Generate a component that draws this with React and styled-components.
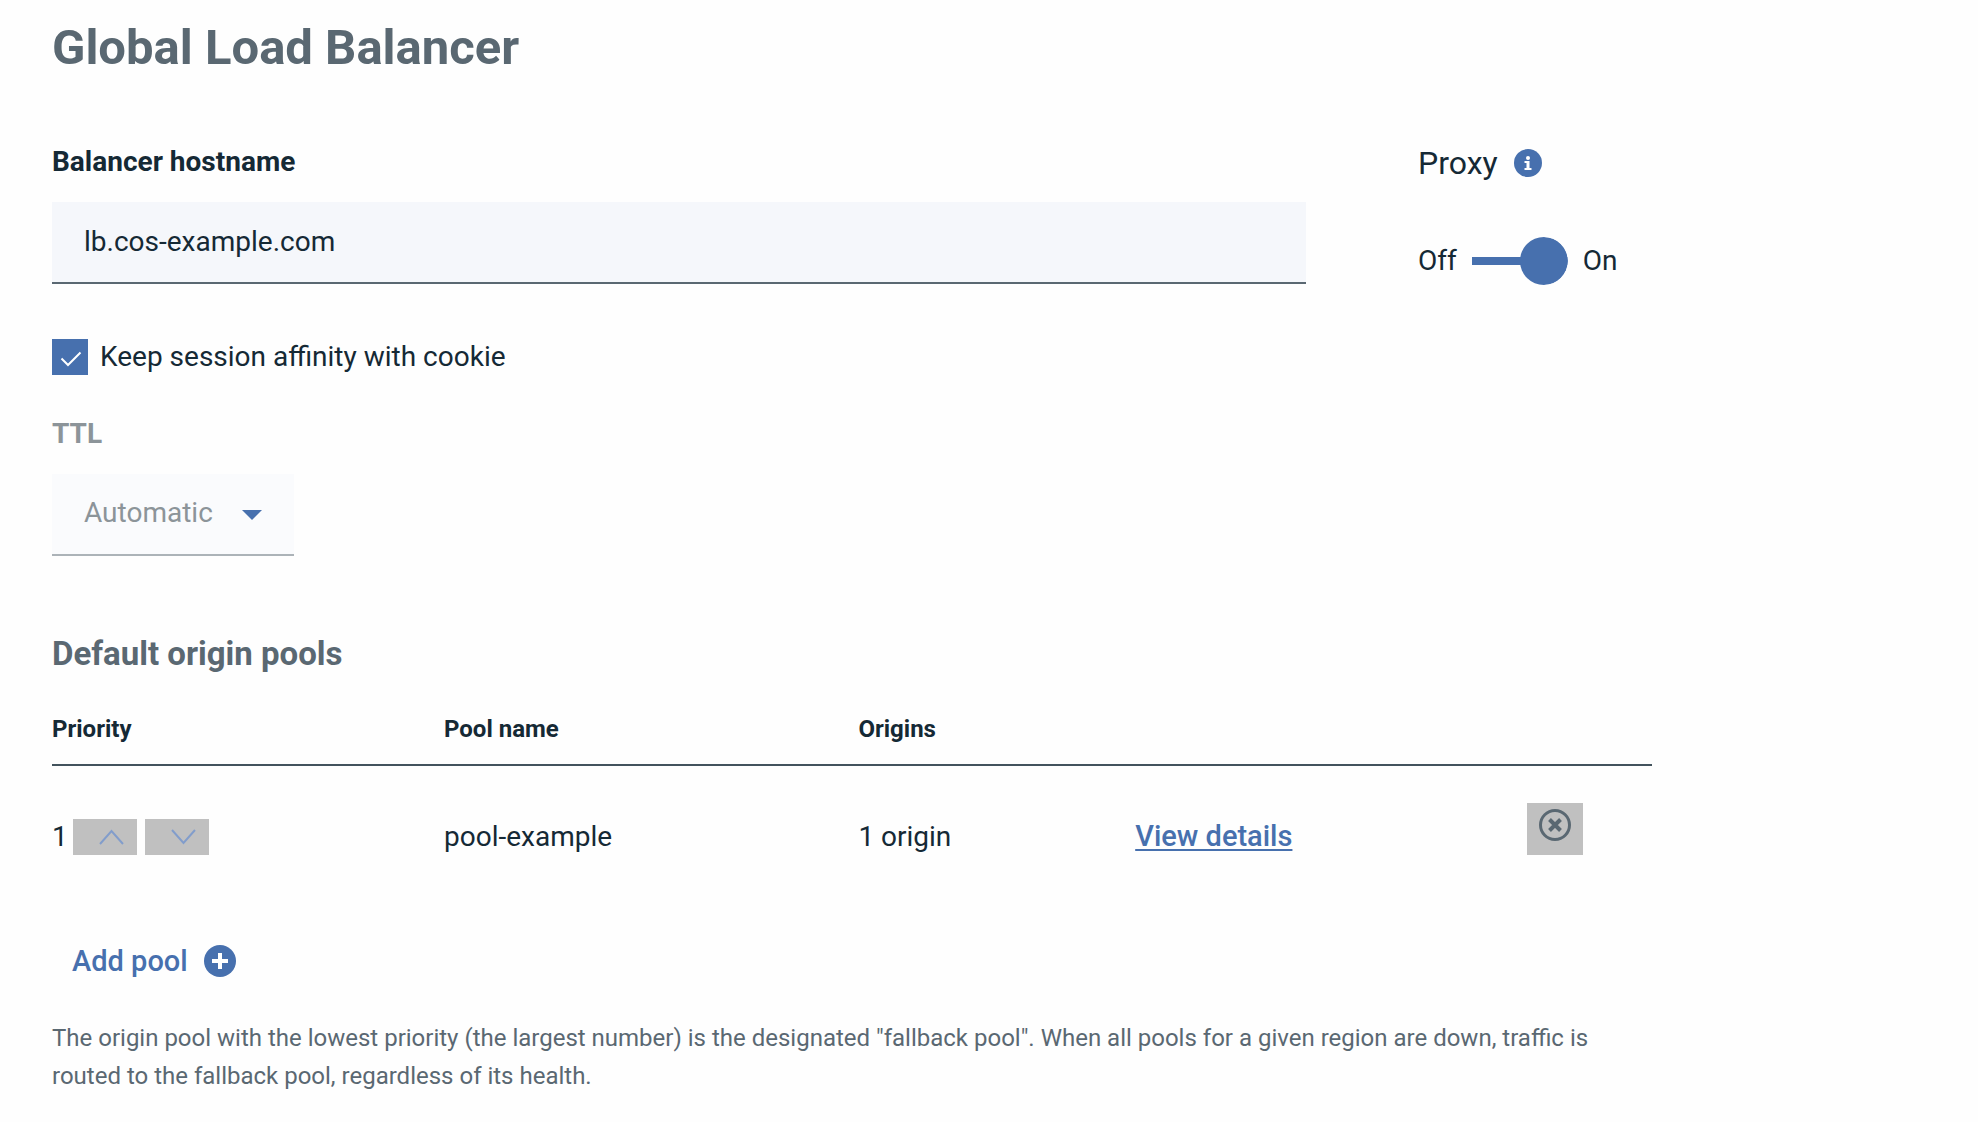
import React, { useState } from "react";
import styled, { createGlobalStyle } from "styled-components";

const color = {
  text: "#152935",
  muted: "#5a6872",
  disabled: "#8c9499",
  brand: "#4770ae",
  field: "#f5f7fb",
  fieldDisabled: "#fafbfd",
  button: "#c0c0c0",
};

const GlobalStyle = createGlobalStyle`
  *, *::before, *::after { box-sizing: border-box; }
  body {
    margin: 0;
    background: #fefefe;
    color: ${color.text};
    font-family: Roboto, "Liberation Sans", sans-serif;
    font-size: 28px;
    line-height: 36px;
  }
  button, input, select { font: inherit; color: inherit; }
`;

const Page = styled.main`
  max-width: 1704px;
  padding: 16px 52px 0;
`;

const Title = styled.h1`
  margin: 0;
  color: ${color.muted};
  font-size: 49px;
  line-height: 64px;
  font-weight: 700;
`;

const Settings = styled.div`
  display: grid;
  grid-template-columns: minmax(0, 1fr) 234px;
  column-gap: 112px;
  margin-top: 64px;
`;

const Fields = styled.div`
  display: flex;
  flex-direction: column;
  align-items: flex-start;
`;

const FieldLabel = styled.label`
  display: block;
  margin-bottom: 22px;
  font-weight: 700;
  color: ${(p) => (p.$disabled ? color.disabled : color.text)};
`;

const HostInput = styled.input`
  width: 100%;
  height: 82px;
  padding: 0 32px 2px;
  border: 0;
  border-bottom: 2px solid ${color.muted};
  border-radius: 0;
  background: ${color.field};
  outline: none;
`;

const CheckRow = styled.label`
  display: flex;
  align-items: center;
  gap: 12px;
  margin: 55px 0 41px;
`;

const CheckBoxWrap = styled.span`
  display: grid;
  place-items: center;
  width: 36px;
  height: 36px;
  > * { grid-area: 1 / 1; }
  svg { pointer-events: none; }
`;

const CheckInput = styled.input`
  appearance: none;
  width: 36px;
  height: 36px;
  margin: 0;
  border: 2px solid ${color.brand};
  &:checked { background: ${color.brand}; }
`;

const SelectWrap = styled.div`
  display: grid;
  align-items: center;
  justify-items: end;
  width: 242px;
  > * { grid-area: 1 / 1; }
  svg { margin-right: 32px; pointer-events: none; }
`;

const TtlSelect = styled.select`
  appearance: none;
  width: 100%;
  height: 82px;
  padding: 0 32px 2px;
  border: 0;
  border-bottom: 2px solid #acb3b8;
  border-radius: 0;
  background: ${color.fieldDisabled};
  color: ${color.disabled};
  opacity: 1;
`;

const ProxyHeading = styled.div`
  display: flex;
  align-items: center;
  gap: 16px;
  font-size: 32px;
  line-height: 38px;
`;

const InfoButton = styled.button`
  display: flex;
  padding: 0;
  border: 0;
  background: none;
`;

const ToggleRow = styled.label`
  display: flex;
  align-items: center;
  gap: 15px;
  margin-top: 55px;
`;

const Toggle = styled.input`
  appearance: none;
  display: flex;
  align-items: center;
  justify-content: ${(p) => (p.checked ? "flex-end" : "flex-start")};
  width: 96px;
  height: 48px;
  margin: 0;
  background: linear-gradient(${color.brand}, ${color.brand}) center / 100% 8px no-repeat;
  clip-path: inset(0 round 0 24px 24px 0);
  &::after {
    content: "";
    width: 48px;
    height: 48px;
    border-radius: 50%;
    background: ${color.brand};
  }
`;

const SectionTitle = styled.h2`
  margin: 78px 0 0;
  color: ${color.muted};
  font-size: 33px;
  line-height: 40px;
  font-weight: 700;
`;

const PoolTable = styled.table`
  width: 100%;
  margin-top: 39px;
  border-collapse: collapse;
  table-layout: fixed;
`;

const HeadCell = styled.th`
  width: ${(p) => p.$width};
  padding: 0 0 19px;
  border-bottom: 2px solid #43535d;
  font-size: 24px;
  line-height: 32px;
  font-weight: 700;
  text-align: left;
`;

const Cell = styled.td`
  height: 124px;
  padding: 18px 0 0;
  vertical-align: middle;
`;

const Priority = styled.div`
  display: flex;
  align-items: center;
`;

const MoveButton = styled.button`
  display: flex;
  align-items: center;
  justify-content: flex-end;
  width: 64px;
  height: 36px;
  margin-right: 8px;
  padding: 0 12px;
  border: 0;
  background: ${color.button};
`;

const Rank = styled.span`
  width: 21px;
`;

const DetailsLink = styled.a`
  color: ${color.brand};
  font-size: 29px;
  font-weight: 500;
  text-decoration: underline;
  text-decoration-thickness: 2px;
  text-underline-offset: 3px;
`;

const RemoveButton = styled.button`
  display: flex;
  justify-content: center;
  width: 56px;
  height: 52px;
  margin-bottom: 16px;
  padding: 6px 0 0;
  border: 0;
  background: ${color.button};
`;

const AddButton = styled.button`
  display: flex;
  align-items: center;
  gap: 16px;
  margin: 54px 0 0 20px;
  padding: 0;
  border: 0;
  background: none;
  color: ${color.brand};
  font-size: 29px;
  font-weight: 500;
`;

const Note = styled.p`
  margin: 40px 0 0;
  color: ${color.muted};
  font-size: 24px;
  line-height: 38px;
`;

const Chevron = ({ up }) => (
  <svg width="28" height="20" viewBox="0 0 28 20" fill="none" stroke="#829dcb" strokeWidth="2" aria-hidden="true">
    <path d={up ? "M3 17 14.5 4 26 17" : "M3 3 14.5 16 26 3"} />
  </svg>
);

const pools = [{ name: "pool-example", origins: "1 origin" }];

export default function App() {
  const [host, setHost] = useState("lb.cos-example.com");
  const [sticky, setSticky] = useState(true);
  const [proxy, setProxy] = useState(true);

  return (
    <>
      <GlobalStyle />
      <Page>
        <Title>Global Load Balancer</Title>
        <Settings>
          <Fields>
            <FieldLabel htmlFor="hostname">Balancer hostname</FieldLabel>
            <HostInput id="hostname" type="text" value={host} onChange={(e) => setHost(e.target.value)} />
            <CheckRow>
              <CheckBoxWrap>
                <CheckInput type="checkbox" checked={sticky} onChange={(e) => setSticky(e.target.checked)} />
                {sticky && (
                  <svg width="36" height="36" viewBox="0 0 36 36" fill="none" stroke="#fff" strokeWidth="2" aria-hidden="true">
                    <path d="M9.5 19.5 16 26 28.5 13.5" />
                  </svg>
                )}
              </CheckBoxWrap>
              Keep session affinity with cookie
            </CheckRow>
            <FieldLabel htmlFor="ttl" $disabled>TTL</FieldLabel>
            <SelectWrap>
              <TtlSelect id="ttl" disabled defaultValue="Automatic">
                <option>Automatic</option>
              </TtlSelect>
              <svg width="20" height="10" viewBox="0 0 20 10" fill={color.brand} aria-hidden="true">
                <path d="M0 0H20L10 10Z" />
              </svg>
            </SelectWrap>
          </Fields>
          <div>
            <ProxyHeading>
              Proxy
              <InfoButton type="button" aria-label="About proxy">
                <svg width="28" height="28" viewBox="0 0 28 28" aria-hidden="true">
                  <circle cx="14" cy="14" r="14" fill={color.brand} />
                  <circle cx="14" cy="9" r="2" fill="#fff" />
                  <path d="M10.5 12H15.5V19H17.5V21H10.5V19H12.5V14H10.5Z" fill="#fff" />
                </svg>
              </InfoButton>
            </ProxyHeading>
            <ToggleRow>
              <span>Off</span>
              <Toggle type="checkbox" role="switch" checked={proxy} onChange={(e) => setProxy(e.target.checked)} />
              <span>On</span>
            </ToggleRow>
          </div>
        </Settings>

        <SectionTitle>Default origin pools</SectionTitle>
        <PoolTable>
          <thead>
            <tr>
              <HeadCell $width="24.5%">Priority</HeadCell>
              <HeadCell $width="25.9%">Pool name</HeadCell>
              <HeadCell $width="17.3%">Origins</HeadCell>
              <HeadCell $width="24.5%" aria-label="Details" />
              <HeadCell aria-label="Remove" />
            </tr>
          </thead>
          <tbody>
            {pools.map((pool, i) => (
              <tr key={pool.name}>
                <Cell>
                  <Priority>
                    <Rank>{i + 1}</Rank>
                    <MoveButton type="button" aria-label="Move up"><Chevron up /></MoveButton>
                    <MoveButton type="button" aria-label="Move down"><Chevron /></MoveButton>
                  </Priority>
                </Cell>
                <Cell>{pool.name}</Cell>
                <Cell>{pool.origins}</Cell>
                <Cell><DetailsLink href="#details">View details</DetailsLink></Cell>
                <Cell>
                  <RemoveButton type="button" aria-label="Remove pool">
                    <svg width="32" height="32" viewBox="0 0 32 32" fill="none" stroke={color.muted} aria-hidden="true">
                      <circle cx="16" cy="16" r="14.5" strokeWidth="3" />
                      <path d="M10.5 10.5 21.5 21.5M21.5 10.5 10.5 21.5" strokeWidth="4" />
                    </svg>
                  </RemoveButton>
                </Cell>
              </tr>
            ))}
          </tbody>
        </PoolTable>
        <AddButton type="button">
          Add pool
          <svg width="32" height="32" viewBox="0 0 32 32" aria-hidden="true">
            <circle cx="16" cy="16" r="16" fill={color.brand} />
            <path d="M16 8V24M8 16H24" stroke="#fff" strokeWidth="4" />
          </svg>
        </AddButton>
        <Note>
          The origin pool with the lowest priority (the largest number) is the designated "fallback pool". When all
          pools for a given region are down, traffic is routed to the fallback pool, regardless of its health.
        </Note>
      </Page>
    </>
  );
}
